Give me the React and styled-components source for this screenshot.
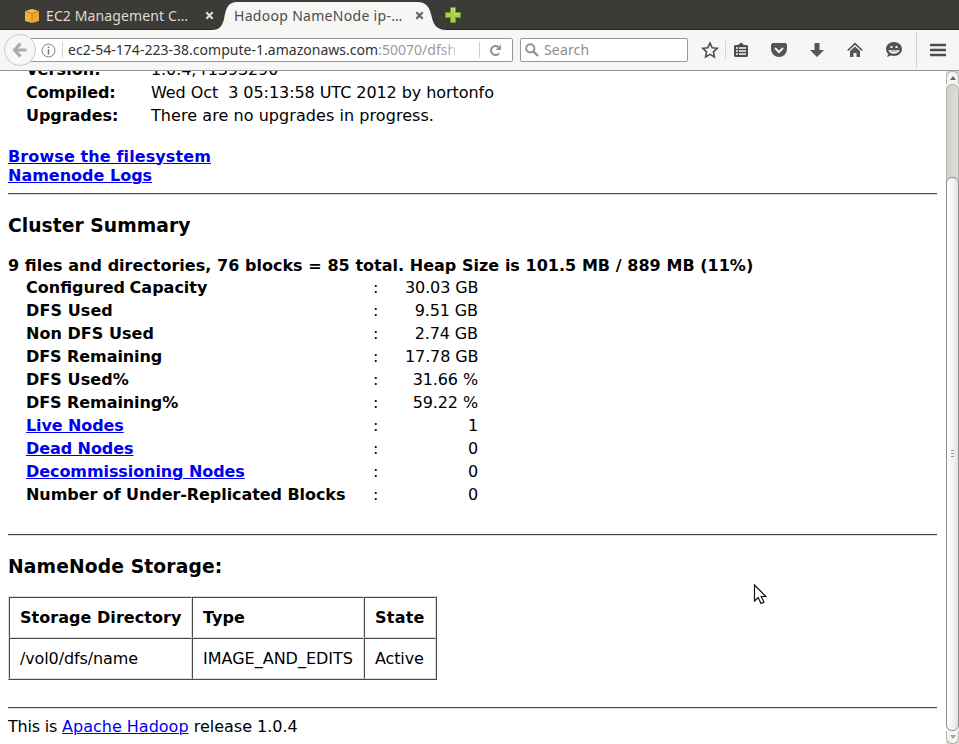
import React from "react";
import styled, { createGlobalStyle } from "styled-components";

const Global = createGlobalStyle`
  html, body { margin: 0; padding: 0; overflow: hidden; background: #fff; }
  * { box-sizing: border-box; }
`;

const Window = styled.div`
  width: 959px;
  height: 744px;
  display: flex;
  flex-direction: column;
  overflow: hidden;
  position: relative;
  background: #fff;
`;

/* ---------- browser chrome ---------- */

const TabStrip = styled.div`
  height: 30px;
  flex: none;
  display: flex;
  background: #3c3b37;
  box-shadow: inset 0 -1px #2a2826;
  font: 14px/30px "Noto Sans", "Open Sans", sans-serif;
`;

const Tab = styled.div`
  position: relative;
  width: ${(p) => p.$width}px;
  padding: 1px 0 0 ${(p) => p.$inset}px;
  height: 30px;
  display: flex;
  align-items: center;
  color: ${(p) => (p.$active ? "#4c4c4c" : "#dfdbd2")};
`;

const TabShape = styled.svg`
  position: absolute;
  left: 0;
  top: 0;
`;

const TabLabel = styled.span`
  position: relative;
  flex: none;
  width: ${(p) => p.$width}px;
  height: 30px;
  line-height: 29px;
  letter-spacing: ${(p) => p.$spacing}px;
  white-space: nowrap;
`;

const TabIcon = styled.svg`
  flex: none;
  position: relative;
  margin-right: ${(p) => p.$gap || 0}px;
`;

const Toolbar = styled.div`
  height: 41px;
  flex: none;
  display: flex;
  align-items: flex-start;
  background: #f6f6f5;
  border-bottom: 1px solid #979797;
  padding: 8px 0 0 30px;
  position: relative;
  font: 14px/22px "Noto Sans", "Open Sans", sans-serif;
`;

const Field = styled.div`
  width: ${(p) => p.$width}px;
  height: 24px;
  margin-right: ${(p) => p.$gap}px;
  border: 1px solid #979797;
  border-radius: 2px;
  background: #fff;
  display: flex;
  align-items: center;
  padding-left: ${(p) => p.$inset}px;
`;

const BackButton = styled.svg`
  position: absolute;
  left: 3px;
  top: 3px;
`;

const FieldRule = styled.i`
  width: 1px;
  height: 16px;
  background: #d0d0d0;
  margin: 0 ${(p) => p.$after}px 0 ${(p) => p.$before}px;
  flex: none;
`;

const Address = styled.span`
  width: 387px;
  overflow: hidden;
  white-space: pre;
  color: #333;
  letter-spacing: 0.02px;
`;

const Port = styled.span`
  color: #9a9a9a;
`;

const Fade = styled.span`
  background: linear-gradient(90deg, #9a9a9a 40%, #ddd);
  -webkit-background-clip: text;
  background-clip: text;
  -webkit-text-fill-color: transparent;
`;

const Placeholder = styled.span`
  color: #8e8e8e;
  margin-left: 5px;
  letter-spacing: 0.15px;
`;

const Actions = styled.div`
  display: flex;
  height: 40px;
  margin-top: -8px;
  align-items: center;
`;

const ActionIcon = styled.svg`
  flex: none;
  margin-right: ${(p) => p.$gap}px;
`;

const ActionRule = styled.i`
  width: 1px;
  height: ${(p) => p.$height}px;
  margin-right: ${(p) => p.$gap}px;
  background: #d3d3d2;
`;

/* ---------- page ---------- */

const Viewport = styled.div`
  flex: 1;
  min-height: 0;
  display: flex;
`;

const Page = styled.main`
  flex: 1;
  overflow: hidden;
  padding: 0 9px 0 8px;
  font: 16px/19px "DejaVu Sans", sans-serif;
  color: #000;
`;

const InfoTable = styled.dl`
  margin: -13px 0 20px 18px;
  display: grid;
  grid-template-columns: 125px 1fr;
  grid-auto-rows: 23px;
  line-height: 23px;
`;

const Term = styled.dt`
  font-weight: bold;
  letter-spacing: ${(p) => p.$tracking || 0}px;
`;

const Detail = styled.dd`
  margin: 0;
  white-space: pre;
  letter-spacing: ${(p) => p.$tracking}px;
`;

const Link = styled.a`
  color: #0000ee;
  text-decoration: underline;
  text-decoration-thickness: 1px;
  text-underline-offset: 1px;
  font-weight: ${(p) => (p.$bold ? "bold" : "normal")};
  letter-spacing: ${(p) => (p.$tracking === undefined ? "inherit" : `${p.$tracking}px`)};
`;

const LinkList = styled.nav`
  display: flex;
  flex-direction: column;
  align-items: flex-start;
`;

const Rule = styled.hr`
  height: 2px;
  border: 0;
  border-top: 1px solid #484848;
  border-bottom: 1px solid #dcdcdc;
  margin: ${(p) => p.$top}px 0 0;
`;

const Heading = styled.h3`
  font-size: 18.72px;
  line-height: 22px;
  margin: 20px 0 0;
  letter-spacing: ${(p) => p.$tracking}px;
`;

const Totals = styled.div`
  font-weight: bold;
  margin-top: 19px;
  word-spacing: 0.15px;
`;

const Stats = styled.div`
  margin: 1px 0 0 18px;
`;

const StatRow = styled.div`
  display: grid;
  grid-template-columns: 347px 32px 73px;
  height: 23px;
  line-height: 23px;
`;

const StatName = styled.span`
  font-weight: bold;
  letter-spacing: ${(p) => p.$tracking}px;
  word-spacing: ${(p) => p.$wordGap || 0}px;
`;

const StatValue = styled.span`
  text-align: right;
  white-space: nowrap;
  letter-spacing: -0.11px;
`;

const Storage = styled.div`
  display: grid;
  grid-template-columns: 183px 172px 72px;
  grid-auto-rows: 41px;
  width: 429px;
  margin-top: 18px;
  border: 1px solid;
  border-color: #dcdcdc #484848 #484848 #dcdcdc;
`;

const Cell = styled.div`
  border: 1px solid;
  border-color: #484848 #dcdcdc #dcdcdc #484848;
  padding: 10px;
  font-weight: ${(p) => (p.$head ? "bold" : "normal")};
  letter-spacing: ${(p) => p.$tracking || 0}px;
  white-space: nowrap;
`;

const Footer = styled.footer`
  margin-top: 8px;
`;

const Lead = styled.span`
  letter-spacing: -0.2px;
`;

/* ---------- scrollbar ---------- */

const Scrollbar = styled.div`
  width: 13px;
  flex: none;
  display: flex;
  flex-direction: column;
  background: #dedcda;
`;

const ScrollButton = styled.div`
  height: ${(p) => p.$height}px;
  flex: none;
  display: flex;
  align-items: center;
  justify-content: center;
  background: #f5f4f3;
  border: 1px solid #b4b1ad;
  border-radius: ${(p) => (p.$down ? "0 0 6px 6px" : "6px 6px 0 0")};
  border-${(p) => (p.$down ? "top" : "bottom")}: 0;
`;

const Trough = styled.div`
  flex: 1;
  display: flex;
  flex-direction: column;
  background: #f5f4f3;
`;

const TroughFill = styled.div`
  height: 101px;
  margin-bottom: -8px;
  flex: none;
  border: 1px solid #b4b1ad;
  border-bottom: 0;
  border-radius: 6px 6px 0 0;
  background: linear-gradient(90deg, #d3d1ce, #dfddda);
`;

const Thumb = styled.div`
  flex: 1;
  border: 1px solid #8f8c89;
  border-radius: 6px;
  background: linear-gradient(90deg, #fff, #f4f3f2 55%, #e3e1df);
  display: flex;
  flex-direction: column;
  align-items: center;
  justify-content: center;
  gap: 2px;
  padding-bottom: 2px;
`;

const Grip = styled.i`
  width: 3px;
  height: 1px;
  background: #999;
`;

const Pointer = styled.svg`
  position: absolute;
  left: 753px;
  top: 583px;
`;

const stats = [
  { name: "Configured Capacity", value: "30.03 GB", tracking: 0, wordGap: -1 },
  { name: "DFS Used", value: "9.51 GB", tracking: 0.1 },
  { name: "Non DFS Used", value: "2.74 GB", tracking: 0.04 },
  { name: "DFS Remaining", value: "17.78 GB", tracking: -0.07 },
  { name: "DFS Used%", value: "31.66 %", tracking: 0.08 },
  { name: "DFS Remaining%", value: "59.22 %", tracking: -0.07 },
  { name: "Live Nodes", value: "1", tracking: -0.1, linked: true },
  { name: "Dead Nodes", value: "0", tracking: -0.07, linked: true },
  { name: "Decommissioning Nodes", value: "0", tracking: -0.08, linked: true },
  { name: "Number of Under-Replicated Blocks", value: "0", tracking: -0.07 },
];

const CloseIcon = ({ color }) => (
  <TabIcon width="9" height="9" viewBox="0 0 9 9">
    <path d="M1.3 1.3 7.7 7.7M7.7 1.3 1.3 7.7" stroke={color} strokeWidth="2.2" />
  </TabIcon>
);

const Tabs = () => (
  <TabStrip>
    <Tab $width={211} $inset={24}>
      <TabIcon width="16" height="16" viewBox="0 0 16 16" $gap={6}>
        <path d="M1 3 8 5.3V15L1 13Z" fill="#f3b13a" />
        <path d="M15 3 8 5.3V15l7-2Z" fill="#eda62b" />
        <path d="M1 3 8 1l7 2-7 2.3Z" fill="#f8bd50" />
        <path d="M1 3 8 5.3 15 3M8 5.3V15" stroke="#b87a18" strokeWidth=".8" fill="none" />
      </TabIcon>
      <TabLabel $width={159} $spacing={0.12}>EC2 Management C…</TabLabel>
      <CloseIcon color="#dfdbd2" />
    </Tab>
    <Tab $active $width={234} $inset={23}>
      <TabShape width="238" height="30" viewBox="0 0 238 30">
        <path d="M0 30C8 30 11 27 13 19 15 9 16 2 27 2H206C217 2 219 9 221 18 223 27 228 30 236 30Z" fill="#f6f6f5" />
      </TabShape>
      <TabLabel $width={181} $spacing={0.3}>Hadoop NameNode ip-…</TabLabel>
      <CloseIcon color="#666" />
    </Tab>
    <Tab $width={20}>
      <TabIcon width="16" height="16" viewBox="0 0 16 16">
        <path d="M5.500.5h5v5h5v5h-5v5h-5v-5h-5v-5h5Z" fill="#acce48" stroke="#6c9a28" />
        <path d="M6.500 5.500v-4h3v5h5" fill="none" stroke="#c9e27d" />
      </TabIcon>
    </Tab>
  </TabStrip>
);

const BrowserToolbar = () => (
  <Toolbar>
    <Field $width={483} $gap={7} $inset={10}>
      <svg width="15" height="15" viewBox="0 0 15 15">
        <circle cx="7.500" cy="7.500" r="6.500" fill="none" stroke="#858585" />
        <path d="M7.500 6.300V11.500M7.500 3.500V5.100" stroke="#777" strokeWidth="1.600" />
      </svg>
      <FieldRule $before={6} $after={5} />
      <Address>
        ec2-54-174-223-38.compute-1.amazonaws.com<Port>:50070/df</Port><Fade>sh</Fade>
      </Address>
      <FieldRule $before={24} $after={9} />
      <svg width="13" height="13" viewBox="0 0 13 13">
        <path d="M10 9.300A4.500 4.500 0 1 1 9.300 3" fill="none" stroke="#8793a0" strokeWidth="2" />
        <path d="M6.500 6H12V.6Z" fill="#8793a0" />
      </svg>
    </Field>
    <BackButton width="34" height="34" viewBox="0 0 34 34">
      <circle cx="17" cy="17" r="15.500" fill="#f7f7f6" stroke="#c9c9c8" />
      <path d="M23.500 17H12M17.500 10.500 11.500 17l6 6.500" fill="none" stroke="#ababab" strokeWidth="3.200" />
    </BackButton>
    <Field $width={168} $gap={13} $inset={4}>
      <svg width="14" height="14" viewBox="0 0 14 14">
        <circle cx="5.300" cy="5.300" r="4.100" fill="none" stroke="#929292" strokeWidth="2" />
        <path d="M8.300 8.300 13 13" stroke="#929292" strokeWidth="2.400" />
      </svg>
      <Placeholder>Search</Placeholder>
    </Field>
    <Actions>
      <ActionIcon width="18" height="18" viewBox="0 0 18 18" $gap={6}>
        <path d="m9 2 2.100 4.700 5.100.6-3.800 3.500 1 5.100L9 13.400l-4.400 2.500 1-5.100L1.800 7.300l5.100-.6Z" fill="none" stroke="#4c4c4c" strokeWidth="1.600" />
      </ActionIcon>
      <ActionRule $height={18} $gap={8} />
      <ActionIcon width="14" height="16" viewBox="0 0 14 16" $gap={23}>
        <path d="M4 3 7 .5 10 3h3l1 1v10l-1 1H1l-1-1V4l1-1Z" fill="#4c4c4c" />
        <path d="M2 6h2M5 6h7M2 9h2M5 9h7M2 12h2M5 12h7" stroke="#f6f6f5" strokeWidth="1.700" />
      </ActionIcon>
      <ActionIcon width="16" height="16" viewBox="0 0 16 16" $gap={23}>
        <path d="M1.500 1h13L16 2.500V7A8 8 0 0 1 0 7V2.500Z" fill="#555" />
        <path d="m4 6 4 4 4-4" fill="none" stroke="#f6f6f5" strokeWidth="2" />
      </ActionIcon>
      <ActionIcon width="14" height="16" viewBox="0 0 14 16" $gap={23}>
        <path d="M4.500 1h5v7H14l-7 7L0 8h4.500Z" fill="#565656" />
      </ActionIcon>
      <ActionIcon width="16" height="16" viewBox="0 0 16 16" $gap={23}>
        <path d="M.7 8.500 8 1.700l7.300 6.800" fill="none" stroke="#505050" strokeWidth="1.600" />
        <path d="M3 8.900 8 4.400l5 4.500V15H9.500v-4h-3v4H3Z" fill="#565656" />
      </ActionIcon>
      <ActionIcon width="17" height="16" viewBox="0 0 17 16" $gap={13}>
        <path d="M8 0C12.500 0 16 3 16 7s-3.500 7-8 7c-1 0-2-.2-3-.5L1 15l1.300-3C.8 10.700 0 9 0 7c0-4 3.500-7 8-7Z" fill="#535353" />
        <path d="M4.500 4h2v2h-2ZM9.500 4h2v2h-2ZM2.500 8h11c-.5 5-10.500 5-11 0" fill="#f6f6f5" />
        <path d="M4.500 9h7" stroke="#535353" strokeWidth=".7" />
      </ActionIcon>
      <ActionRule $height={36} $gap={13} />
      <ActionIcon width="16" height="14" viewBox="0 0 16 14">
        <path d="M1 2h14M1 7h14M1 12h14" stroke="#4c4c4c" strokeWidth="2.600" strokeLinecap="round" />
      </ActionIcon>
    </Actions>
  </Toolbar>
);

export default function App() {
  return (
    <Window>
      <Global />
      <Tabs />
      <BrowserToolbar />
      <Viewport>
        <Page>
          <InfoTable>
            <Term $tracking={0.1}>Version:</Term>
            <Detail $tracking={-0.1}>1.0.4, r1393290</Detail>
            <Term $tracking={-0.1}>Compiled:</Term>
            <Detail $tracking={-0.065}>{"Wed Oct  3 05:13:58 UTC 2012 by hortonfo"}</Detail>
            <Term $tracking={-0.05}>Upgrades:</Term>
            <Detail $tracking={0.06}>There are no upgrades in progress.</Detail>
          </InfoTable>
          <LinkList>
            <Link $bold $tracking={0.11}>Browse the filesystem</Link>
            <Link $bold>Namenode Logs</Link>
          </LinkList>
          <Rule $top={8} />
          <Heading $tracking={0.05}>Cluster Summary</Heading>
          <Totals>9 files and directories, 76 blocks = 85 total. Heap Size is 101.5 MB / 889 MB (11%)</Totals>
          <Stats>
            {stats.map(({ name, value, tracking, wordGap, linked }) => (
              <StatRow key={name}>
                <StatName $tracking={tracking} $wordGap={wordGap}>
                  {linked ? <Link $bold>{name}</Link> : name}
                </StatName>
                <span>:</span>
                <StatValue>{value}</StatValue>
              </StatRow>
            ))}
          </Stats>
          <Rule $top={28} />
          <Heading $tracking={0.13}>NameNode Storage:</Heading>
          <Storage>
            <Cell $head $tracking={0.04}>Storage Directory</Cell>
            <Cell $head>Type</Cell>
            <Cell $head $tracking={0.25}>State</Cell>
            <Cell $tracking={-0.12}>/vol0/dfs/name</Cell>
            <Cell>IMAGE_AND_EDITS</Cell>
            <Cell $tracking={-0.12}>Active</Cell>
          </Storage>
          <Rule $top={27} />
          <Footer>
            <Lead>This is </Lead>
            <Link>Apache Hadoop</Link> release 1.0.4
          </Footer>
        </Page>
        <Scrollbar>
          <ScrollButton $height={13}>
            <svg width="6" height="4" viewBox="0 0 6 4">
              <path d="M0 4 3 0l3 4Z" fill="#666" />
            </svg>
          </ScrollButton>
          <Trough>
            <TroughFill />
            <Thumb>
              <Grip />
              <Grip />
              <Grip />
            </Thumb>
          </Trough>
          <ScrollButton $down $height={13}>
            <svg width="6" height="4" viewBox="0 0 6 4">
              <path d="M0 0h6L3 4Z" fill="#a5a3a1" />
            </svg>
          </ScrollButton>
        </Scrollbar>
      </Viewport>
      <Pointer width="14" height="22" viewBox="0 0 14 22">
        <path d="M1.500 2v16l3.700-3.500L8 20.500l3-1.400-2.800-5.600h4.600Z" fill="#fff" stroke="#111" strokeWidth="1.200" />
      </Pointer>
    </Window>
  );
}
